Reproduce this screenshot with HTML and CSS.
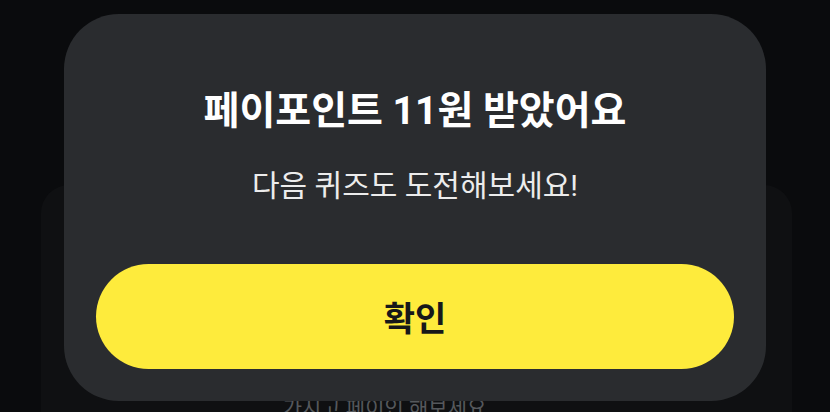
FILE: index.html
```html
<!DOCTYPE html>
<html lang="ko">
<head>
    <meta charset="UTF-8">
    <meta name="viewport" content="width=device-width, initial-scale=1.0">
    <title>퀴즈 보상</title>
    <link rel="stylesheet" href="styles.css">
</head>
<body>
    <div class="page">
        <div class="quiz-card">
            <p class="quiz-hint">가지고 페이인 해보세요</p>
        </div>
    </div>

    <div class="overlay">
        <div class="dialog">
            <h1 class="dialog-title">페이포인트 11원 받았어요</h1>
            <p class="dialog-text">다음 퀴즈도 도전해보세요!</p>
            <button class="confirm-btn">확인</button>
        </div>
    </div>
</body>
</html>
```

FILE: styles.css
```css
* {
    box-sizing: border-box;
}
html, body {
    margin: 0;
    height: 100%;
}
body {
    background: #0a0b0d;
    font-family: Roboto, "Noto Sans CJK KR", sans-serif;
    color: #fff;
    overflow: hidden;
}
.page {
    height: 100%;
    padding: 185px 38px 0 41px;
}
.quiz-card {
    height: 100%;
    background: #0f1012;
    border-radius: 28px 28px 0 0;
    padding: 208px 64px 0 0;
    text-align: center;
}
.quiz-hint {
    margin: 0;
    font-size: 21px;
    line-height: 30px;
    color: #55585c;
}
.overlay {
    position: fixed;
    inset: 0;
    display: flex;
    justify-content: center;
    align-items: flex-start;
    padding-top: 14px;
}
.dialog {
    width: 702px;
    background: #2a2c2f;
    border-radius: 55px;
    padding: 72px 32px 32px;
    text-align: center;
}
.dialog-title {
    margin: 0;
    font-size: 39px;
    line-height: 50px;
    font-weight: 700;
    color: #fff;
}
.dialog-text {
    margin: 32px 0 0;
    font-size: 30px;
    line-height: 36px;
    color: #ececec;
}
.confirm-btn {
    display: block;
    width: 100%;
    height: 105px;
    margin-top: 60px;
    border: none;
    border-radius: 53px;
    background: #feeb3c;
    color: #17181a;
    font-family: inherit;
    font-size: 34px;
    font-weight: 700;
    cursor: pointer;
}
```
